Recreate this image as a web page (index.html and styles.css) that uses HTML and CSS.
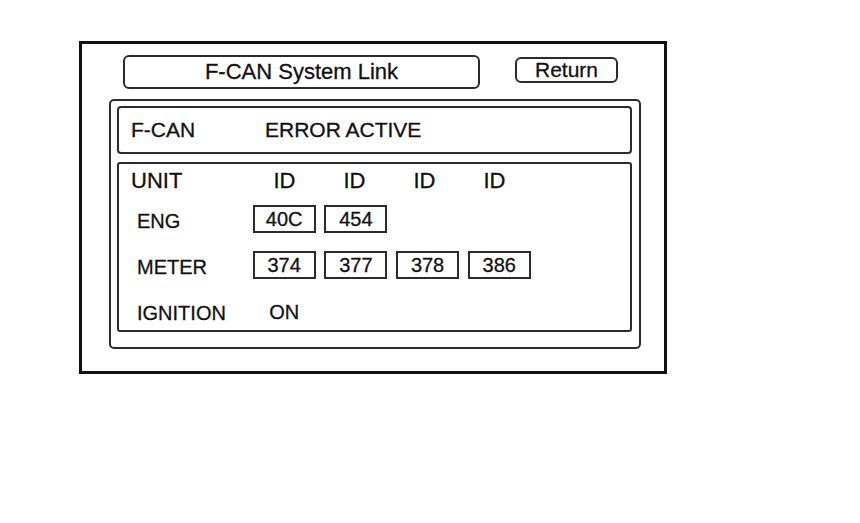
FILE: index.html
```html
<!DOCTYPE html>
<html lang="en">
<head>
    <meta charset="UTF-8">
    <meta name="viewport" content="width=device-width, initial-scale=1.0">
    <title>F-CAN System Link</title>
    <link rel="stylesheet" href="styles.css">
</head>
<body>
    <div class="screen">
        <div class="header">
            <div class="title">F-CAN System Link</div>
            <button class="return-btn">Return</button>
        </div>

        <div class="panel">
            <div class="status">
                <span class="status-name">F-CAN</span>
                <span class="status-value">ERROR ACTIVE</span>
            </div>

            <div class="unit-table">
                <div class="table-head">
                    <span class="head-label">UNIT</span>
                    <span class="head-id">ID</span>
                    <span class="head-id">ID</span>
                    <span class="head-id">ID</span>
                    <span class="head-id">ID</span>
                </div>
                <div class="table-row">
                    <span class="row-label">ENG</span>
                    <span class="id-box">40C</span>
                    <span class="id-box">454</span>
                </div>
                <div class="table-row">
                    <span class="row-label">METER</span>
                    <span class="id-box">374</span>
                    <span class="id-box">377</span>
                    <span class="id-box">378</span>
                    <span class="id-box">386</span>
                </div>
                <div class="table-row">
                    <span class="row-label">IGNITION</span>
                    <span class="id-plain">ON</span>
                </div>
            </div>
        </div>
    </div>
</body>
</html>
```

FILE: styles.css
```css
* {
    box-sizing: border-box;
}

body {
    margin: 0;
    padding: 41px 0 0 79px;
    font-family: 'Liberation Sans', Arial, sans-serif;
    color: #111;
    background: #fff;
    -webkit-text-stroke: 0.3px #111;
}

.screen {
    width: 588px;
    height: 333px;
    border: 3px solid #111;
}

/* top bar */
.header {
    display: flex;
    align-items: flex-start;
    margin-top: 11px;
    padding-left: 41px;
}

.title {
    width: 357px;
    height: 34px;
    border: 2px solid #2b2b2b;
    border-radius: 6px;
    font-size: 22px;
    line-height: 30px;
    text-align: center;
}

.return-btn {
    width: 103px;
    height: 26px;
    margin: 2px 0 0 35px;
    padding: 0;
    border: 2px solid #2b2b2b;
    border-radius: 6px;
    background: #fff;
    color: #111;
    font-family: inherit;
    font-size: 21px;
    line-height: 22px;
}

/* main panel */
.panel {
    width: 532px;
    margin: 10px 0 0 27px;
    padding: 5px 7px 15px 6px;
    border: 2px solid #2b2b2b;
    border-radius: 5px;
}

.status {
    display: flex;
    align-items: center;
    height: 48px;
    padding-left: 12px;
    border: 2px solid #2b2b2b;
    border-radius: 4px;
    font-size: 21px;
}

.status-name {
    width: 134px;
}

.unit-table {
    height: 170px;
    margin-top: 8px;
    padding-top: 2.5px;
    border: 2px solid #2b2b2b;
    border-radius: 3px;
}

.table-head,
.table-row {
    display: grid;
    grid-template-columns: 125px repeat(4, 63px);
    column-gap: 8.7px;
    align-items: center;
    height: 28px;
}

.table-head {
    grid-template-columns: 127px repeat(4, 63px);
    column-gap: 7px;
    font-size: 22px;
    margin-bottom: 10.5px;
}

.table-row {
    font-size: 20px;
}

.table-row + .table-row {
    margin-top: 18px;
}

.head-label {
    padding-left: 12px;
}

.head-id {
    text-align: center;
}

.row-label {
    padding-left: 18px;
    margin-top: 4px;
}

.id-box {
    height: 28px;
    border: 2px solid #2b2b2b;
    line-height: 24px;
    text-align: center;
}

.id-plain {
    text-align: center;
    margin-top: 2px;
}
```
